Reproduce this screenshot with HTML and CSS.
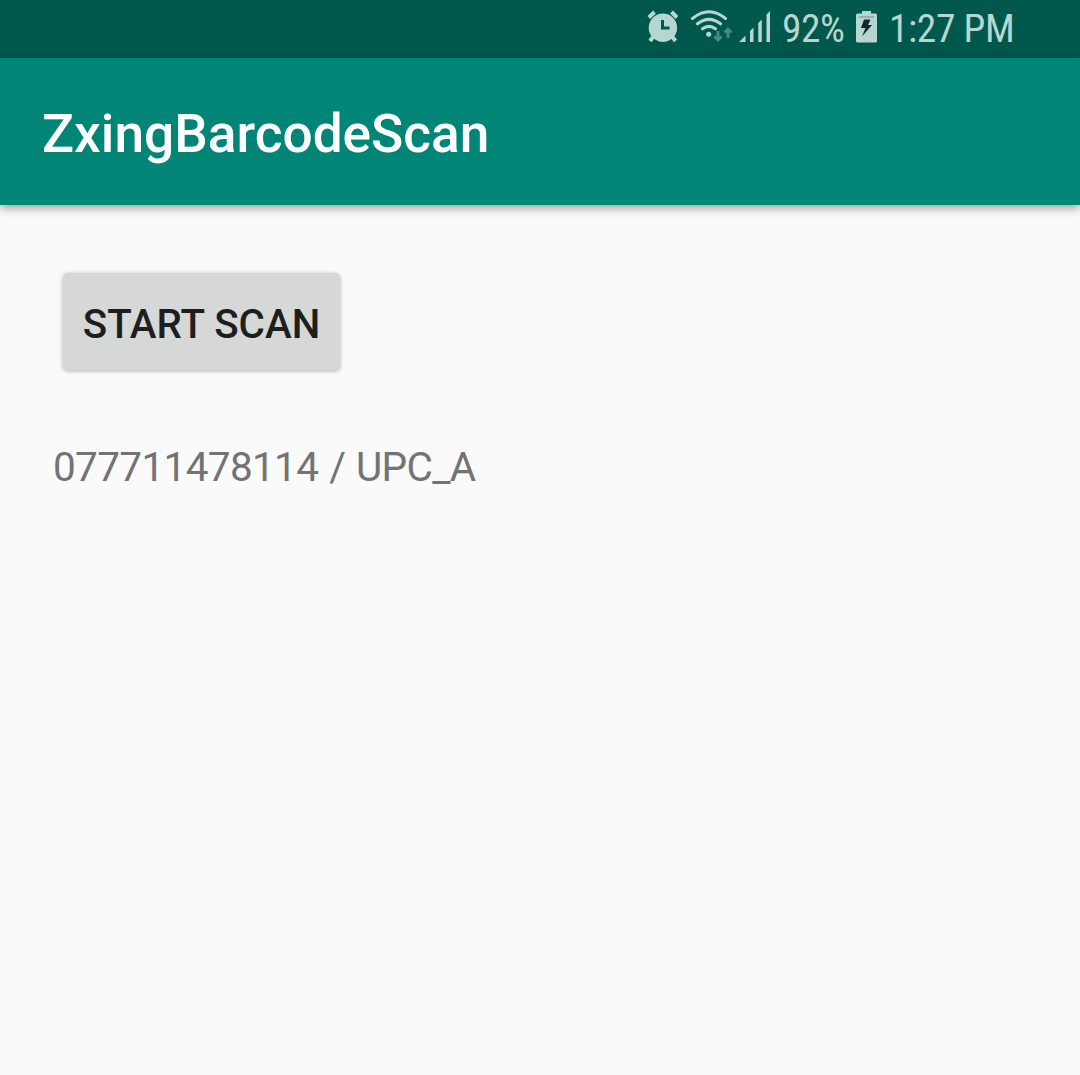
FILE: index.html
```html
<!DOCTYPE html>
<html lang="en">
<head>
<meta charset="utf-8">
<title>ZxingBarcodeScan</title>
<link rel="stylesheet" href="styles.css">
</head>
<body>
<div class="status-bar">
  <svg class="icon alarm" width="32" height="34" viewBox="0 0 32 34" aria-label="Alarm">
    <circle cx="15.900" cy="17.800" r="14.200"/>
    <path class="line" d="M1.800 7.500 7.500 2M24.500 2 30 7.500M6 27 3 31M25.500 27 28.500 31"/>
    <path class="cut" d="M15.500 10V18H22.500"/>
  </svg>
  <svg class="icon wifi" width="44" height="34" viewBox="0 0 44 34" aria-label="Wi-Fi">
    <path class="arc" d="M2.500 8.500Q19 -5 35.500 8.500M7.500 13.800Q19 5 30.500 13.800M12.500 18.800Q19 14 25.500 18.800"/>
    <circle cx="18.700" cy="24.200" r="2.500"/>
    <path class="traffic" d="M28 21V30M24.500 26.500 28 30 31.500 26.500M38 28V19M34.500 22.500 38 19 41.500 22.500"/>
  </svg>
  <svg class="icon signal" width="32" height="32" viewBox="0 0 32 32" aria-label="Signal">
    <path d="M0 31 6.500 24.500V31ZM11 20 14.500 16.500V31H11ZM19.300 12 22.800 8.500V31H19.300ZM27.500 3.500 31 0V31H27.500Z"/>
  </svg>
  <span class="status-text percent">92%</span>
  <svg class="icon battery" width="22" height="32" viewBox="0 0 22 32" aria-label="Charging">
    <path d="M6 0H15V2.500H19.500Q21 2.500 21 4V30Q21 31.500 19.500 31.500H1.500Q0 31.500 0 30V4Q0 2.500 1.500 2.500H6Z"/>
    <path class="seam" d="M3 6H18"/>
    <path class="bolt" d="M8 8.500H14.500L12 14H16L6 25.500 9.500 17H5Z"/>
  </svg>
  <span class="status-text clock">1:27 PM</span>
</div>
<header class="app-bar"><h1>ZxingBarcodeScan</h1></header>
<main>
  <button class="scan">START SCAN</button>
  <p class="result">077711478114 / UPC_A</p>
</main>
</body>
</html>
```
FILE: styles.css
```css
* { box-sizing: border-box; }
body {
  margin: 0;
  min-height: 1075px;
  background: #fafafa;
  font-family: Roboto, sans-serif;
}
.status-bar {
  display: flex;
  align-items: flex-start;
  height: 58px;
  padding: 10px 0 0 647px;
  background: #00574b;
}
.icon { flex: none; fill: #b7d6d2; }
.line, .arc, .traffic, .cut { fill: none; stroke: #b7d6d2; }
.line { stroke-width: 4; }
.icon .cut { stroke: #00574b; stroke-width: 3; }
.arc { stroke-width: 3; stroke-linecap: round; }
.icon .traffic { stroke: #478a81; stroke-width: 2.800; }
.battery .bolt { fill: #12282a; }
.battery .seam { stroke: #5c9189; stroke-width: 1; }
.wifi { margin-left: 11px; }
.signal { margin-left: 5px; margin-top: 1px; }
.battery { margin-left: 10px; margin-top: 1px; }
.status-text {
  flex: none;
  font-family: "Roboto Condensed", Roboto, sans-serif;
  font-stretch: 75%;
  font-size: 39.400px;
  line-height: 46px;
  letter-spacing: -.4px;
  margin-top: -4px;
  color: #b7d6d2;
  white-space: pre;
}
.percent { width: 64px; margin-left: 11px; }
.clock { margin-left: 11px; }
.app-bar {
  display: flex;
  align-items: center;
  height: 147px;
  padding: 4px 42px 0;
  background: #008577;
  box-shadow: 0 3px 9px rgba(0, 0, 0, .38);
}
h1 {
  margin: 0;
  font-size: 53.200px;
  font-weight: 500;
  line-height: 62px;
  color: #fff;
}
main {
  display: flex;
  flex-direction: column;
  align-items: flex-start;
  padding: 68px 53px;
}
.scan {
  width: 277px;
  height: 97px;
  margin-left: 10px;
  padding: 7px 0 0;
  border: 0;
  border-radius: 5px;
  background: #d6d8d7;
  box-shadow: 0 1px 4px rgba(0, 0, 0, .3);
  font: 500 40.300px/46px Roboto, sans-serif;
  color: #1d1e1e;
  white-space: nowrap;
}
.result {
  margin: 74px 0 0;
  font-size: 40.500px;
  letter-spacing: -.65px;
  word-spacing: 1.400px;
  line-height: 46px;
  color: #737373;
}
```
